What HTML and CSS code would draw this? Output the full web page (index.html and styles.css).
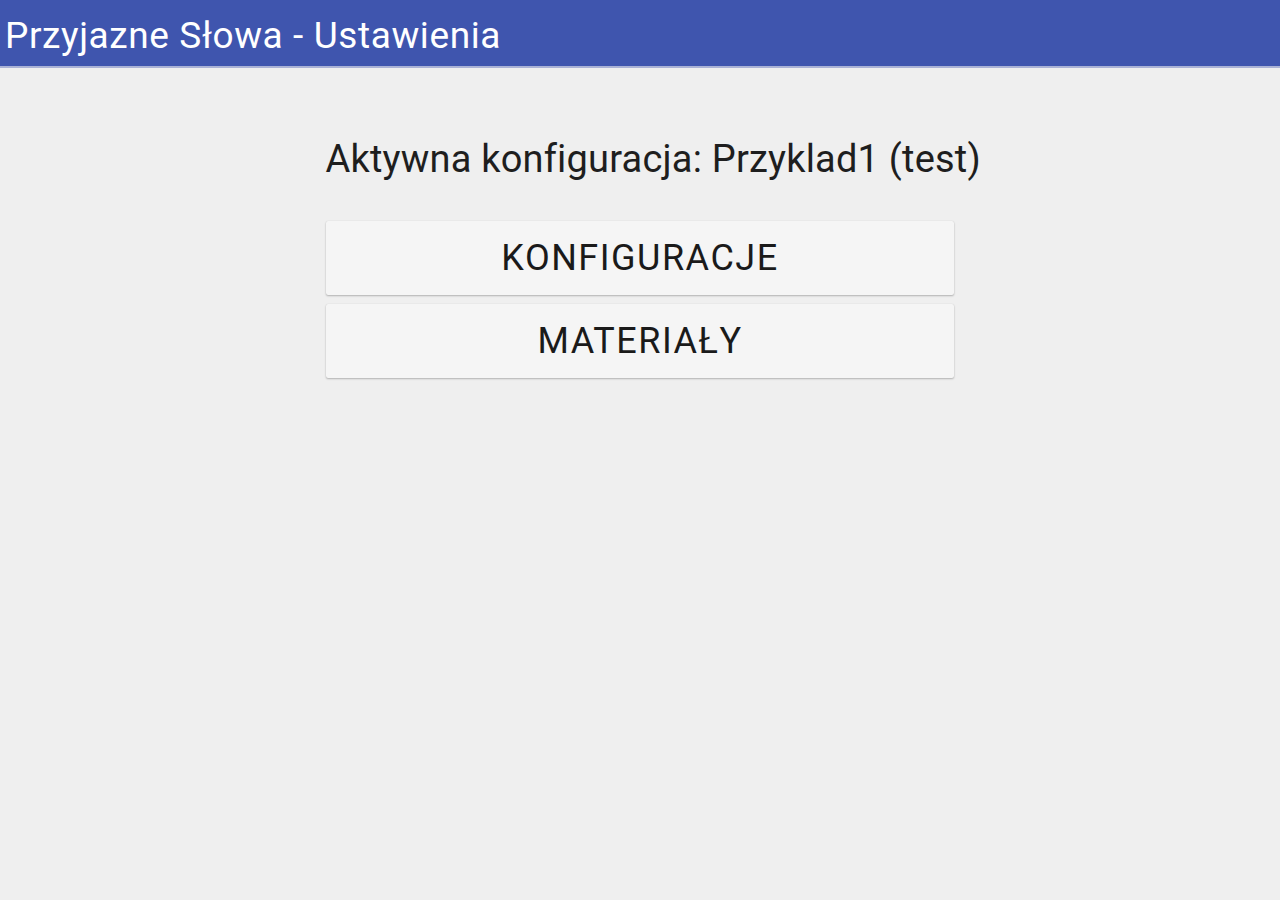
FILE: index.html
```html
<!DOCTYPE html>
<html lang="pl">
<head>
<meta charset="utf-8">
<title>Przyjazne Słowa - Ustawienia</title>
<link rel="stylesheet" href="styles.css">
</head>
<body>
<header class="appbar">
  <h1 class="appbar-title">Przyjazne Słowa - Ustawienia</h1>
</header>
<main class="content">
  <div class="panel">
    <p class="active-config">Aktywna konfiguracja: Przyklad1 (test)</p>
    <button class="btn">KONFIGURACJE</button>
    <button class="btn">MATERIAŁY</button>
  </div>
</main>
</body>
</html>
```

FILE: styles.css
```css
* { box-sizing: border-box; }
html, body {
  margin: 0;
  padding: 0;
  height: 100%;
}
body {
  background: #efefef;
  font-family: Roboto, "Noto Sans", sans-serif;
  color: #212121;
}
.appbar {
  height: 68px;
  background: #3f55ae;
  border-bottom: 2px solid #aab2d6;
  display: flex;
  align-items: center;
  padding-left: 5px;
}
.appbar-title {
  margin: 0;
  font-weight: 400;
  font-size: 37px;
  color: #ffffff;
  line-height: 1;
  padding-top: 4px;
  letter-spacing: 0.6px;
}
.content {
  display: flex;
  justify-content: center;
}
.panel {
  width: 628px;
  margin-left: -1px;
  display: flex;
  flex-direction: column;
  padding-top: 68px;
}
.active-config {
  margin: 0 0 39px 0;
  font-size: 38px;
  line-height: 46px;
  white-space: nowrap;
  color: #1e1e1e;
  letter-spacing: 0.2px;
}
.btn {
  height: 74px;
  width: 628px;
  margin: 0 0 9px 0;
  border: none;
  border-radius: 2px;
  background: #f5f5f5;
  box-shadow: 0 1px 2px rgba(0,0,0,0.25), 0 0 1px rgba(0,0,0,0.12);
  font-family: Roboto, "Noto Sans", sans-serif;
  font-size: 36px;
  font-weight: 400;
  color: #1a1a1a;
  letter-spacing: 1.5px;
  padding: 0 0 0 1px;
}
```
